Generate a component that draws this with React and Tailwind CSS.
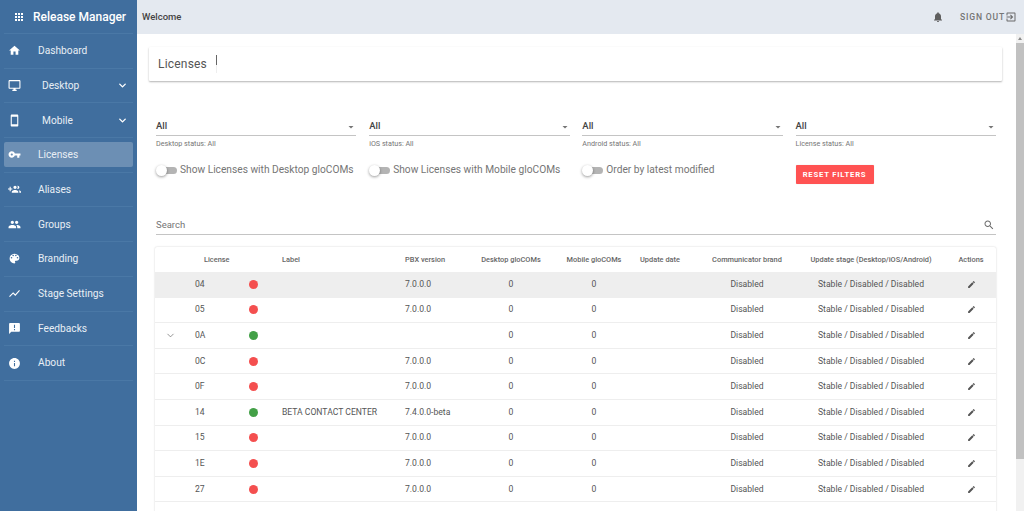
import { ChevronDown } from 'lucide-react';

const ICONS = {
  apps: 'M4 8h4V4H4v4zm6 12h4v-4h-4v4zm-6 0h4v-4H4v4zm0-6h4v-4H4v4zm6 0h4v-4h-4v4zm6-10v4h4V4h-4zm-6 4h4V4h-4v4zm6 6h4v-4h-4v4zm0 6h4v-4h-4v4z',
  home: 'M10 20v-6h4v6h5v-8h3L12 3 2 12h3v8z',
  desktop: 'M21 2H3c-1.1 0-2 .9-2 2v12c0 1.1.9 2 2 2h7v2H8v2h8v-2h-2v-2h7c1.1 0 2-.9 2-2V4c0-1.1-.9-2-2-2zm0 14H3V4h18v12z',
  mobile: 'M17 1.01L7 1c-1.1 0-2 .9-2 2v18c0 1.1.9 2 2 2h10c1.1 0 2-.9 2-2V3c0-1.1-.9-1.99-2-1.99zM17 19H7V5h10v14z',
  key: 'M12.65 10C11.83 7.67 9.61 6 7 6c-3.31 0-6 2.69-6 6s2.69 6 6 6c2.61 0 4.83-1.67 5.65-4H17v4h4v-4h2v-4H12.65zM7 14c-1.1 0-2-.9-2-2s.9-2 2-2 2 .9 2 2-.9 2-2 2z',
  groupAdd: 'M8 10H5V7H3v3H0v2h3v3h2v-3h3v-2zm10 1c1.66 0 2.99-1.34 2.99-3S19.66 5 18 5c-.32 0-.63.05-.91.14.57.81.9 1.79.9 2.86s-.34 2.04-.9 2.86c.28.09.59.14.91.14zm-5 0c1.66 0 2.99-1.34 2.99-3S14.66 5 13 5s-3 1.34-3 3 1.34 3 3 3zm6.62 2.16c.83.73 1.38 1.66 1.38 2.84v2h3v-2c0-1.54-2.37-2.49-4.38-2.84zM13 13c-2 0-6 1-6 3v2h12v-2c0-2-4-3-6-3z',
  group: 'M16 11c1.66 0 2.99-1.34 2.99-3S17.66 5 16 5c-1.66 0-3 1.34-3 3s1.34 3 3 3zm-8 0c1.66 0 2.99-1.34 2.99-3S9.66 5 8 5C6.34 5 5 6.34 5 8s1.34 3 3 3zm0 2c-2.33 0-7 1.17-7 3.5V19h14v-2.5c0-2.33-4.67-3.5-7-3.5zm8 0c-.29 0-.62.02-.97.05 1.16.84 1.97 1.97 1.97 3.45V19h6v-2.5c0-2.33-4.67-3.5-7-3.5z',
  palette: 'M12 3c-4.97 0-9 4.03-9 9s4.03 9 9 9c.83 0 1.5-.67 1.5-1.5 0-.39-.15-.74-.39-1.01-.23-.26-.38-.61-.38-.99 0-.83.67-1.5 1.5-1.5H16c2.76 0 5-2.24 5-5 0-4.42-4.03-8-9-8zm-5.5 9c-.83 0-1.5-.67-1.5-1.5S5.67 9 6.5 9 8 9.67 8 10.5 7.33 12 6.5 12zm3-4C8.67 8 8 7.33 8 6.5S8.67 5 9.5 5s1.5.67 1.5 1.5S10.33 8 9.5 8zm5 0c-.83 0-1.5-.67-1.5-1.5S13.67 5 14.5 5s1.5.67 1.5 1.5S15.33 8 14.5 8zm3 4c-.83 0-1.5-.67-1.5-1.5S16.67 9 17.5 9s1.5.67 1.5 1.5-.67 1.5-1.5 1.5z',
  chart: 'M3.5 18.49l6-6.01 4 4L22 6.92l-1.41-1.41-7.09 7.97-4-4L2 16.99z',
  announcement: 'M20 2H4c-1.1 0-1.99.9-1.99 2L2 22l4-4h14c1.1 0 2-.9 2-2V4c0-1.1-.9-2-2-2zm-7 9h-2V5h2v6zm0 4h-2v-2h2v2z',
  info: 'M12 2C6.48 2 2 6.48 2 12s4.48 10 10 10 10-4.48 10-10S17.52 2 12 2zm1 15h-2v-6h2v6zm0-8h-2V7h2v2z',
  bell: 'M12 22c1.1 0 2-.9 2-2h-4c0 1.1.89 2 2 2zm6-6v-5c0-3.07-1.64-5.64-4.5-6.32V4c0-.83-.67-1.5-1.5-1.5s-1.5.67-1.5 1.5v.68C7.63 5.36 6 7.92 6 11v5l-2 2v1h16v-1l-2-2z',
  exit: 'M10.09 15.59L11.5 17l5-5-5-5-1.41 1.41L12.67 11H3v2h9.67l-2.58 2.59zM19 3H5c-1.11 0-2 .9-2 2v4h2V5h14v14H5v-4H3v4c0 1.1.89 2 2 2h14c1.1 0 2-.9 2-2V5c0-1.1-.9-2-2-2z',
  edit: 'M3 17.25V21h3.75L17.81 9.94l-3.75-3.75L3 17.25zM20.71 7.04c.39-.39.39-1.02 0-1.41l-2.34-2.34c-.39-.39-1.02-.39-1.41 0l-1.83 1.83 3.75 3.75 1.83-1.83z',
  search: 'M15.5 14h-.79l-.28-.27C15.41 12.59 16 11.11 16 9.5 16 5.91 13.09 3 9.5 3S3 5.91 3 9.5 5.91 16 9.5 16c1.61 0 3.09-.59 4.23-1.57l.27.28v.79l5 4.99L20.49 19l-4.99-5zm-6 0C7.01 14 5 11.99 5 9.5S7.01 5 9.5 5 14 7.01 14 9.5 11.99 14 9.5 14z',
  dropdown: 'M7 10l5 5 5-5z',
};

function Icon({ name, className }) {
  return (
    <svg viewBox="0 0 24 24" fill="currentColor" className={className}>
      <path d={ICONS[name]} />
    </svg>
  );
}

const NAV = [
  { label: 'Dashboard', icon: 'home' },
  { label: 'Desktop', icon: 'desktop', sub: true },
  { label: 'Mobile', icon: 'mobile', sub: true },
  { label: 'Licenses', icon: 'key', active: true },
  { label: 'Aliases', icon: 'groupAdd' },
  { label: 'Groups', icon: 'group' },
  { label: 'Branding', icon: 'palette' },
  { label: 'Stage Settings', icon: 'chart' },
  { label: 'Feedbacks', icon: 'announcement' },
  { label: 'About', icon: 'info' },
];

const FILTERS = ['Desktop status: All', 'iOS status: All', 'Android status: All', 'License status: All'];

const ROWS = [
  { id: '04', ok: false, pbx: '7.0.0.0', hover: true },
  { id: '05', ok: false, pbx: '7.0.0.0' },
  { id: '0A', ok: true, pbx: '', expand: true },
  { id: '0C', ok: false, pbx: '7.0.0.0' },
  { id: '0F', ok: false, pbx: '7.0.0.0' },
  { id: '14', ok: true, pbx: '7.4.0.0-beta', label: 'BETA CONTACT CENTER' },
  { id: '15', ok: false, pbx: '7.0.0.0' },
  { id: '1E', ok: false, pbx: '7.0.0.0' },
  { id: '27', ok: false, pbx: '7.0.0.0' },
];

const GRID = 'grid grid-cols-[30px_55px_26px_124px_80px_82px_84px_62px_98px_150px_50px] items-center';

function Toggle({ label }) {
  return (
    <div className="flex items-center h-[20px]">
      <div className="relative w-[20px] h-[7px] ml-[1px] rounded-full bg-[#b4b4b4]">
        {/* knob */}
        <div className="absolute -left-[1px] -top-[2px] w-[11px] h-[11px] rounded-full bg-white shadow-[0_1px_3px_rgba(0,0,0,0.4)]" />
      </div>
      <span className="ml-[3px] text-[10.2px] text-[#757575] whitespace-nowrap">{label}</span>
    </div>
  );
}

export default function App() {
  return (
    <div className="flex h-screen overflow-hidden bg-white font-['Roboto',sans-serif]">
      {/* Sidebar */}
      <aside className="w-[137px] shrink-0 bg-[#406e9e] text-[#e8eef5]">
        <div className="flex items-center h-[33px] px-[13px] text-white">
          <Icon name="apps" className="w-[12px] h-[12px] shrink-0 mt-[1px]" />
          <span className="ml-[8px] text-[12px] font-medium whitespace-nowrap">Release Manager</span>
        </div>
        <nav className="mx-[4px] border-t border-[#4a78a6]">
          {NAV.map((item) => (
            <div key={item.label} className="h-[34.7px] border-b border-[#4a78a6] flex items-center">
              <div className={`flex items-center w-full h-[25px] rounded-[2px] ${item.active ? 'bg-[#6c8fb4]' : ''}`}>
                <Icon name={item.icon} className={`w-[13px] h-[13px] shrink-0 ml-[4px] text-white ${item.sub ? 'mr-[21px]' : 'mr-[17px]'}`} />
                <span className="text-[10.2px] whitespace-nowrap">{item.label}</span>
                {item.sub && <ChevronDown strokeWidth={3} className="w-[11px] h-[11px] ml-auto mr-[5px] text-white" />}
              </div>
            </div>
          ))}
        </nav>
      </aside>

      <div className="flex-1 min-w-0 flex flex-col">
        {/* Top bar */}
        <header className="flex items-center h-[34px] shrink-0 pl-[5px] pr-[7px] bg-[#e4e9f0]">
          <span className="text-[9.5px] font-medium text-[#444]">Welcome</span>
          <Icon name="bell" className="w-[12px] h-[12px] ml-auto text-[#5f5f5f]" />
          <span className="ml-[16px] text-[8.6px] font-medium tracking-[0.8px] text-[#757575]">SIGN OUT</span>
          <Icon name="exit" className="w-[12px] h-[12px] text-[#6b6b6b]" />
        </header>

        <div className="flex-1 min-h-0 flex">
          <main className="flex-1 min-w-0 overflow-hidden pl-[12px] pr-[14px] pt-[13px]">
            {/* Title card */}
            <div className="flex h-[34px] pl-[9px] bg-white rounded-[1px] shadow-[0_1px_2px_rgba(0,0,0,0.3)]">
              <h1 className="mt-[9px] text-[12px] leading-[16px] tracking-[0.2px] text-[#555]">Licenses</h1>
              <div className="relative ml-[9px] mt-[8px] w-px h-[18px] bg-[#eeeeee]">
                <div className="absolute top-0 left-0 w-px h-[10px] bg-[#666]" />
              </div>
            </div>

            <div className="pl-[7px] pr-[6px]">
              {/* Filters */}
              <div className="grid grid-cols-4 gap-x-[12.7px] mt-[37px]">
                {FILTERS.map((f) => (
                  <div key={f}>
                    <div className="flex items-center justify-between h-[18px] border-b border-[#c4c4c4]">
                      <span className="text-[9.5px] text-[#444] font-medium">All</span>
                      <Icon name="dropdown" className="w-[12px] h-[12px] -mr-[1px] text-[#757575]" />
                    </div>
                    <p className="mt-[3px] text-[7.2px] leading-[9px] text-[#757575]">{f}</p>
                  </div>
                ))}
              </div>

              <div className="grid grid-cols-4 gap-x-[12.7px] mt-[12px] h-[29px]">
                <Toggle label="Show Licenses with Desktop gloCOMs" />
                <Toggle label="Show Licenses with Mobile gloCOMs" />
                <Toggle label="Order by latest modified" />
                <div>
                  <button className="w-[78px] h-[19px] -mt-[1px] bg-[#ff5252] text-white text-[7.7px] font-bold tracking-[0.8px] rounded-[1px] shadow-[0_0_1px_rgba(0,0,0,0.2)]">
                    RESET FILTERS
                  </button>
                </div>
              </div>

              {/* Search */}
              <div className="flex items-center justify-between h-[19px] mt-[27px] border-b border-[#c4c4c4]">
                <span className="text-[9.5px] text-[#757575]">Search</span>
                <Icon name="search" className="w-[12px] h-[12px] mr-[1px] text-[#6b6b6b]" />
              </div>

              {/* Table */}
              <div className="mt-[12px] -ml-px rounded-[2px] shadow-[0_0_2px_rgba(0,0,0,0.2)]">
                <div className={`${GRID} h-[25px] text-[7.4px] font-medium text-[#666]`}>
                  <span />
                  <span className="pl-[19px]">License</span>
                  <span />
                  <span className="pl-[16px]">Label</span>
                  <span className="pl-[15px]">PBX version</span>
                  <span className="flex justify-center whitespace-nowrap">Desktop gloCOMs</span>
                  <span className="flex justify-center whitespace-nowrap">Mobile gloCOMs</span>
                  <span className="pr-[14px] flex justify-center whitespace-nowrap">Update date</span>
                  <span className="flex justify-center whitespace-nowrap">Communicator brand</span>
                  <span className="flex justify-center whitespace-nowrap">Update stage (Desktop/iOS/Android)</span>
                  <span className="flex justify-center">Actions</span>
                </div>
                {ROWS.map((r) => (
                  <div key={r.id} className={`${GRID} h-[25.6px] border-b border-[#eeeeee] text-[8.6px] text-[#555] ${r.hover ? 'bg-[#eeeeee]' : 'bg-white'}`}>
                    <span className="flex justify-center">
                      {r.expand && <ChevronDown strokeWidth={1.5} className="w-[11px] h-[11px] text-[#666]" />}
                    </span>
                    <span className="pl-[10px]">{r.id}</span>
                    <span className="flex justify-center">
                      <span className={`w-[9px] h-[9px] rounded-full ${r.ok ? 'bg-[#43a047]' : 'bg-[#f44f4f]'}`} />
                    </span>
                    <span className="pl-[16px] whitespace-nowrap">{r.label}</span>
                    <span className="pl-[15px] whitespace-nowrap">{r.pbx}</span>
                    <span className="text-center">0</span>
                    <span className="text-center">0</span>
                    <span />
                    <span className="text-center">Disabled</span>
                    <span className="text-center whitespace-nowrap">Stable / Disabled / Disabled</span>
                    <span className="flex justify-center">
                      <Icon name="edit" className="w-[9px] h-[9px] text-[#555]" />
                    </span>
                  </div>
                ))}
                <div className="h-[25.6px] bg-white" />
              </div>
            </div>
          </main>

          {/* Scrollbar */}
          <div className="w-[8px] shrink-0 flex flex-col bg-[#f1f1f1]">
            <div className="h-[9px] flex items-center justify-center">
              <div className="w-0 h-0 border-x-[2.5px] border-x-transparent border-b-[3px] border-b-[#8a8a8a]" />
            </div>
            <div className="h-[416px] bg-[#c1c1c1]" />
          </div>
        </div>
      </div>
    </div>
  );
}
